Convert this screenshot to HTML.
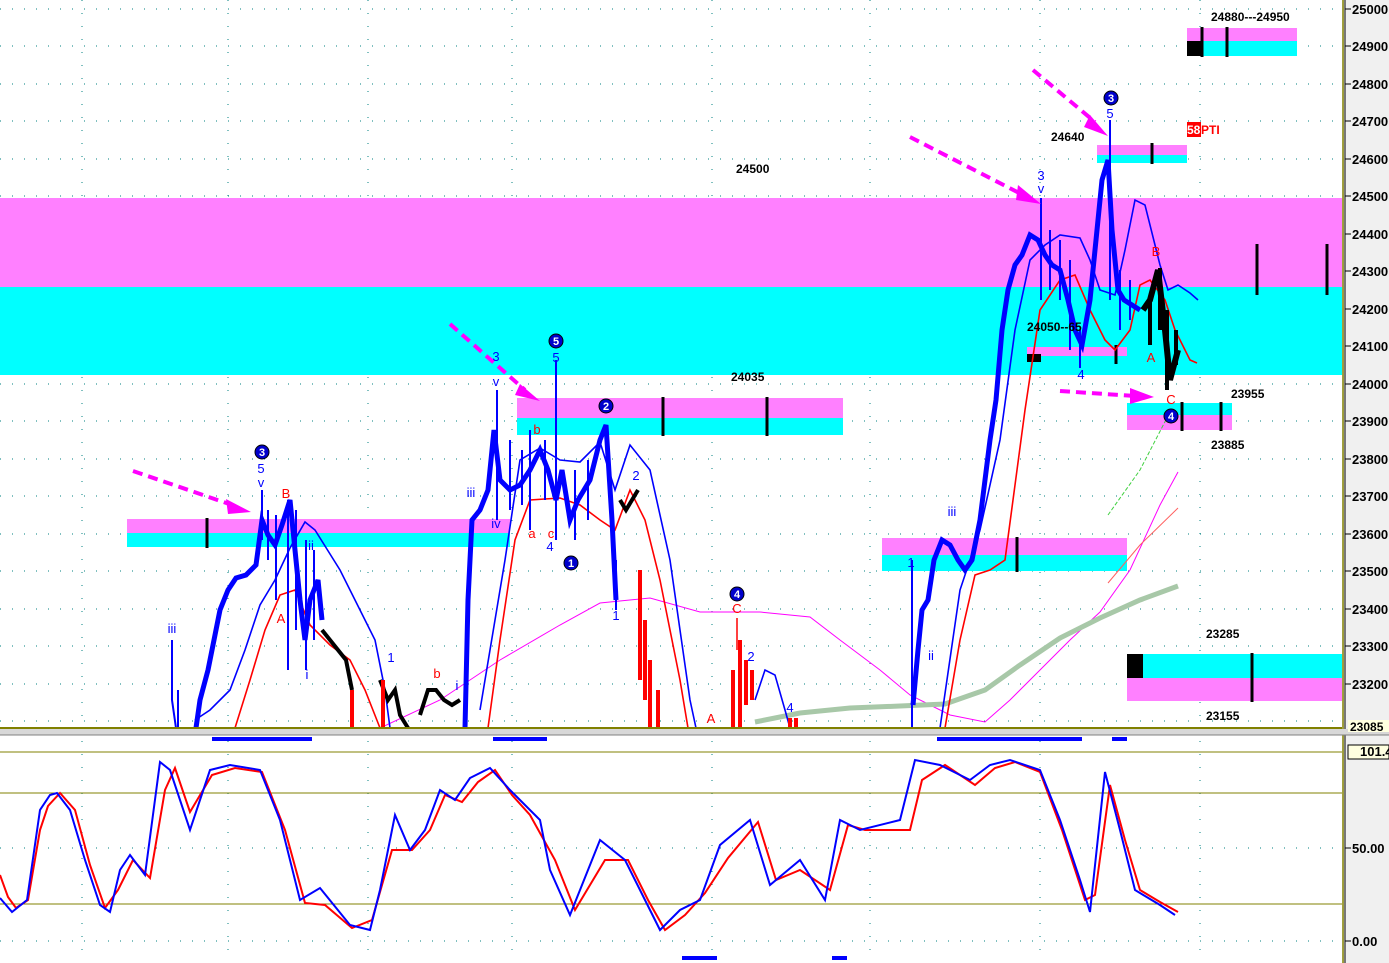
<!DOCTYPE html>
<html><head><meta charset="utf-8"><style>
html,body{margin:0;padding:0;background:#fff;}
svg{display:block;font-family:"Liberation Sans",Arial,sans-serif;}
</style></head><body>
<svg width="1389" height="963" viewBox="0 0 1389 963" xmlns="http://www.w3.org/2000/svg">
<rect x="0" y="0" width="1389" height="963" fill="#fff"/>
<rect x="1343" y="0" width="46" height="963" fill="#f0f0f0"/>
<line x1="1343" y1="0" x2="1343" y2="963" stroke="#808000" stroke-width="1.5"/>
<line x1="1345" y1="0" x2="1345" y2="963" stroke="#000" stroke-width="1"/>
<g stroke="#008080" stroke-width="1" stroke-dasharray="1,11">
<line x1="0" y1="9" x2="1342" y2="9"/><line x1="0" y1="46" x2="1342" y2="46"/><line x1="0" y1="84" x2="1342" y2="84"/><line x1="0" y1="121" x2="1342" y2="121"/><line x1="0" y1="159" x2="1342" y2="159"/><line x1="0" y1="196" x2="1342" y2="196"/><line x1="0" y1="234" x2="1342" y2="234"/><line x1="0" y1="271" x2="1342" y2="271"/><line x1="0" y1="309" x2="1342" y2="309"/><line x1="0" y1="346" x2="1342" y2="346"/><line x1="0" y1="384" x2="1342" y2="384"/><line x1="0" y1="421" x2="1342" y2="421"/><line x1="0" y1="459" x2="1342" y2="459"/><line x1="0" y1="496" x2="1342" y2="496"/><line x1="0" y1="534" x2="1342" y2="534"/><line x1="0" y1="571" x2="1342" y2="571"/><line x1="0" y1="609" x2="1342" y2="609"/><line x1="0" y1="646" x2="1342" y2="646"/><line x1="0" y1="684" x2="1342" y2="684"/><line x1="0" y1="721" x2="1342" y2="721"/>
<line x1="0" y1="848" x2="1342" y2="848"/><line x1="0" y1="941" x2="1342" y2="941"/>
</g>
<g stroke="#008080" stroke-width="1" stroke-dasharray="1,12">
<line x1="82" y1="0" x2="82" y2="960"/><line x1="228" y1="0" x2="228" y2="960"/><line x1="368" y1="0" x2="368" y2="960"/><line x1="512" y1="0" x2="512" y2="960"/><line x1="712" y1="0" x2="712" y2="960"/><line x1="870" y1="0" x2="870" y2="960"/><line x1="1040" y1="0" x2="1040" y2="960"/><line x1="1200" y1="0" x2="1200" y2="960"/>
</g>
<rect x="0" y="198" width="1342" height="89" fill="#ff80ff"/>
<rect x="0" y="287" width="1342" height="88" fill="#00ffff"/>
<rect x="1187" y="28" width="110" height="13" fill="#ff80ff"/>
<rect x="1187" y="41" width="110" height="15" fill="#00ffff"/>
<rect x="1187" y="41" width="16" height="15" fill="#000"/>
<rect x="1097" y="145" width="90" height="10" fill="#ff80ff"/>
<rect x="1097" y="155" width="90" height="8" fill="#00ffff"/>
<rect x="517" y="398" width="326" height="20" fill="#ff80ff"/>
<rect x="517" y="418" width="326" height="17" fill="#00ffff"/>
<rect x="127" y="519" width="383" height="14" fill="#ff80ff"/>
<rect x="127" y="533" width="383" height="14" fill="#00ffff"/>
<rect x="882" y="538" width="245" height="17" fill="#ff80ff"/>
<rect x="882" y="555" width="245" height="16" fill="#00ffff"/>
<rect x="1027" y="347" width="100" height="9" fill="#ff80ff"/>
<rect x="1027" y="354" width="14" height="8" fill="#000"/>
<rect x="1127" y="403" width="105" height="12" fill="#00ffff"/>
<rect x="1127" y="415" width="105" height="15" fill="#ff80ff"/>
<rect x="1127" y="654" width="215" height="24" fill="#00ffff"/>
<rect x="1127" y="678" width="215" height="23" fill="#ff80ff"/>
<rect x="1127" y="654" width="16" height="24" fill="#000"/>
<g stroke="#000" stroke-width="3">
<line x1="1202" y1="27" x2="1202" y2="57"/><line x1="1227" y1="27" x2="1227" y2="57"/>
<line x1="1152" y1="143" x2="1152" y2="164"/><line x1="663" y1="397" x2="663" y2="436"/><line x1="767" y1="397" x2="767" y2="436"/>
<line x1="207" y1="518" x2="207" y2="548"/><line x1="1017" y1="537" x2="1017" y2="572"/>
<line x1="1182" y1="402" x2="1182" y2="431"/><line x1="1221" y1="402" x2="1221" y2="431"/>
<line x1="1252" y1="653" x2="1252" y2="702"/><line x1="1257" y1="244" x2="1257" y2="295"/><line x1="1327" y1="244" x2="1327" y2="295"/>
<line x1="1116" y1="345" x2="1116" y2="364"/>
</g>
<polyline fill="none" stroke="#ff00ff" stroke-width="1" points="380,728 440,700 500,660 560,625 600,603 650,598 700,612 760,612 810,617 840,640 880,670 910,695 950,715 985,722 1010,700 1040,670 1070,640 1100,612 1130,570 1160,505 1178,472"/>
<polyline fill="none" stroke="#ff6060" stroke-width="1" points="1108,583 1140,545 1178,508"/>
<polyline fill="none" stroke="#40d040" stroke-width="1" stroke-dasharray="4,2" points="1108,515 1140,470 1170,412"/>
<polyline fill="none" stroke="#a8c8a8" stroke-width="5" points="755,722 800,713 850,708 900,706 945,704 985,690 1020,665 1060,638 1100,618 1140,600 1178,586"/>
<polyline fill="none" stroke="#0000ff" stroke-width="1.6" points="195,720 210,710 230,690 245,650 260,605 275,580 290,548 305,522 315,530 340,570 360,610 375,640 385,690 390,728"/>
<polyline fill="none" stroke="#0000ff" stroke-width="1.6" points="480,710 490,650 505,560 520,460 540,448 560,460 580,462 600,442 615,490 630,445 650,470 670,560 690,700 696,728"/>
<polyline fill="none" stroke="#0000ff" stroke-width="1.6" points="755,700 765,670 775,675 785,710 790,728"/>
<polyline fill="none" stroke="#0000ff" stroke-width="1.6" points="940,728 960,590 980,530 1000,440 1015,330 1030,260 1045,245 1060,235 1080,238 1090,260 1100,290 1115,295 1125,250 1135,200 1145,205 1160,265 1168,290 1178,285 1190,293 1198,300"/>
<polyline fill="none" stroke="#ff0000" stroke-width="1.6" points="235,728 250,680 265,630 280,595 295,590 310,625 330,645 350,660 365,690 380,728"/>
<polyline fill="none" stroke="#ff0000" stroke-width="1.6" points="488,728 500,640 515,540 530,500 560,498 580,505 600,520 615,530 630,490 645,520 660,580 680,680 688,728"/>
<polyline fill="none" stroke="#ff0000" stroke-width="1.6" points="945,728 960,640 975,575 990,570 1005,560 1025,410 1040,310 1060,280 1075,275 1090,310 1105,340 1115,350 1130,330 1140,285 1150,280 1165,300 1175,330 1190,360 1197,363"/>
<g stroke="#0000ff" stroke-width="2" fill="none">
<polyline points="172,640 172,700 176,728"/>
<polyline points="178,690 178,728"/>
<polyline stroke-width="5" points="196,728 200,700 208,670 214,640 220,610 228,590 236,578 246,575 256,565 262,520 268,535 275,545 282,525 290,500 296,560 300,600 305,640 310,600 318,580 322,620"/>
<line x1="262" y1="490" x2="262" y2="540"/><line x1="288" y1="500" x2="288" y2="670"/><line x1="314" y1="550" x2="314" y2="640"/><line x1="306" y1="540" x2="306" y2="670"/>
<line x1="268" y1="510" x2="268" y2="560"/><line x1="276" y1="515" x2="276" y2="600"/><line x1="296" y1="510" x2="296" y2="630"/>
<polyline stroke-width="5" points="465,728 468,600 472,520 480,510 488,490 494,430 500,480 510,490 520,485 530,470 540,450 548,470 556,500 562,470 570,520 578,500 590,480 600,440 606,425 612,520 616,600"/>
<line x1="497" y1="390" x2="497" y2="520"/><line x1="556" y1="360" x2="556" y2="540"/><line x1="530" y1="430" x2="530" y2="530"/><line x1="616" y1="560" x2="616" y2="610"/>
<line x1="510" y1="440" x2="510" y2="510"/><line x1="522" y1="450" x2="522" y2="505"/><line x1="545" y1="440" x2="545" y2="500"/><line x1="575" y1="470" x2="575" y2="540"/><line x1="588" y1="460" x2="588" y2="520"/>
<polyline stroke-width="5" points="913,705 918,650 922,610 928,600 934,560 942,540 950,545 958,560 965,570 972,560 980,520 985,480 990,440 996,400 1002,330 1008,290 1015,265 1022,255 1030,235 1038,240 1045,255 1052,265 1060,270 1068,300 1075,330 1082,345 1090,300 1096,240 1102,180 1108,160 1112,230 1118,290 1124,300 1132,305 1140,310"/>
<line x1="912" y1="560" x2="912" y2="728"/><line x1="1041" y1="198" x2="1041" y2="300"/><line x1="1110" y1="120" x2="1110" y2="300"/><line x1="1080" y1="330" x2="1080" y2="368"/>
<line x1="1050" y1="230" x2="1050" y2="290"/><line x1="1060" y1="240" x2="1060" y2="300"/><line x1="1070" y1="260" x2="1070" y2="350"/><line x1="1120" y1="270" x2="1120" y2="330"/><line x1="1130" y1="280" x2="1130" y2="320"/>
</g>
<g stroke="#000" stroke-width="4" fill="none">
<polyline points="322,630 330,640 338,650 346,660 352,690"/>
<polyline points="380,680 388,700 395,690 400,715 408,728"/>
<polyline points="420,715 428,690 436,690 444,700 452,705 460,700"/>
<polyline points="620,500 626,510 632,500 638,490"/>
<polyline stroke-width="6" points="1143,310 1150,300 1158,270 1165,330 1170,380 1178,350"/>
<line x1="1160" y1="268" x2="1160" y2="330"/><line x1="1167" y1="310" x2="1167" y2="390"/>
<line x1="1150" y1="300" x2="1150" y2="345"/><line x1="1176" y1="330" x2="1176" y2="365"/>
</g>
<g stroke="#ff0000" stroke-width="4" fill="none">
<line x1="640" y1="570" x2="640" y2="680"/><line x1="645" y1="620" x2="645" y2="700"/><line x1="650" y1="660" x2="650" y2="728"/><line x1="658" y1="690" x2="658" y2="728"/>
<line x1="352" y1="690" x2="352" y2="728"/><line x1="383" y1="680" x2="383" y2="728"/>
<line x1="733" y1="670" x2="733" y2="728"/><line x1="740" y1="640" x2="740" y2="728"/><line x1="746" y1="660" x2="746" y2="705"/><line x1="752" y1="670" x2="752" y2="700"/><line x1="737" y1="618" x2="737" y2="650" stroke-width="1.5"/>
<line x1="790" y1="718" x2="790" y2="728"/><line x1="796" y1="718" x2="796" y2="728"/>
</g>
<g stroke="#ff00ff" stroke-width="4" stroke-dasharray="10,6" fill="none">
<line x1="133" y1="471" x2="235" y2="506"/><line x1="450" y1="324" x2="525" y2="390"/><line x1="910" y1="137" x2="1025" y2="196"/><line x1="1033" y1="70" x2="1095" y2="122"/><line x1="1060" y1="391" x2="1135" y2="396"/>
</g>
<g fill="#ff00ff">
<polygon points="251,512 226,499 228,514"/><polygon points="540,401 520,384 515,395"/><polygon points="1041,204 1018,185 1016,200"/><polygon points="1108,136 1090,115 1084,127"/><polygon points="1154,397 1130,388 1130,404"/>
</g>
<rect x="0" y="727" width="1342" height="2" fill="#808000"/>
<rect x="0" y="729" width="1389" height="6" fill="#d8d8d8"/>
<line x1="0" y1="735" x2="1389" y2="735" stroke="#808080"/>
<g fill="#0000ff">
<rect x="212" y="737" width="100" height="4"/><rect x="493" y="737" width="54" height="4"/><rect x="937" y="737" width="145" height="4"/><rect x="1112" y="737" width="15" height="4"/>
<rect x="682" y="956" width="35" height="4"/><rect x="832" y="956" width="15" height="4"/>
</g>
<line x1="0" y1="752" x2="1342" y2="752" stroke="#808000"/>
<line x1="0" y1="793" x2="1342" y2="793" stroke="#808000"/>
<line x1="0" y1="904" x2="1342" y2="904" stroke="#808000"/>
<polyline fill="none" stroke="#ff0000" stroke-width="2" points="0,875 8,897 16,908 28,900 40,830 48,806 60,793 75,810 90,865 105,908 118,890 133,860 150,878 165,790 175,768 190,812 212,775 235,768 262,772 285,830 305,903 325,905 352,928 372,920 392,850 412,850 430,830 445,795 462,802 478,782 495,770 512,795 530,815 555,860 575,910 605,860 628,860 648,900 665,930 685,915 705,893 728,858 758,822 776,880 800,870 830,890 848,825 865,830 910,830 922,780 945,765 975,785 995,768 1015,762 1040,772 1062,830 1085,900 1095,895 1110,785 1125,840 1140,890 1160,902 1178,912"/>
<polyline fill="none" stroke="#0000ff" stroke-width="2" points="0,898 12,912 27,900 40,810 50,795 57,793 70,810 85,860 100,905 110,912 120,870 130,855 145,875 160,762 170,770 190,830 210,770 230,765 260,770 280,820 300,900 320,888 350,925 370,930 380,890 395,815 410,850 425,830 440,790 455,800 470,778 490,768 510,790 540,820 550,870 570,915 600,840 625,860 640,890 660,930 680,910 700,900 720,845 750,820 770,885 800,860 825,900 840,820 860,830 900,820 915,760 940,765 970,780 990,765 1010,760 1040,770 1060,820 1080,880 1090,912 1105,772 1120,830 1135,890 1160,905 1175,915"/>
<g font-size="13" font-weight="bold" fill="#000">
<text x="1352" y="14">25000</text><text x="1352" y="51">24900</text><text x="1352" y="89">24800</text><text x="1352" y="126">24700</text><text x="1352" y="164">24600</text><text x="1352" y="201">24500</text><text x="1352" y="239">24400</text><text x="1352" y="276">24300</text><text x="1352" y="314">24200</text><text x="1352" y="351">24100</text><text x="1352" y="389">24000</text><text x="1352" y="426">23900</text><text x="1352" y="464">23800</text><text x="1352" y="501">23700</text><text x="1352" y="539">23600</text><text x="1352" y="576">23500</text><text x="1352" y="614">23400</text><text x="1352" y="651">23300</text><text x="1352" y="689">23200</text>
<text x="1352" y="853">50.00</text><text x="1352" y="946">0.00</text>
</g>
<rect x="1348" y="745" width="41" height="14" fill="#ffffe0" stroke="#000"/>
<text x="1360" y="756" font-size="13" font-weight="bold">101.4</text>
<rect x="1348" y="720" width="41" height="12" fill="#ffffe0"/>
<text x="1350" y="731" font-size="12" font-weight="bold">23085</text>
<g stroke="#000"><line x1="1345" y1="9" x2="1351" y2="9"/><line x1="1345" y1="46" x2="1351" y2="46"/><line x1="1345" y1="84" x2="1351" y2="84"/><line x1="1345" y1="121" x2="1351" y2="121"/><line x1="1345" y1="159" x2="1351" y2="159"/><line x1="1345" y1="196" x2="1351" y2="196"/><line x1="1345" y1="234" x2="1351" y2="234"/><line x1="1345" y1="271" x2="1351" y2="271"/><line x1="1345" y1="309" x2="1351" y2="309"/><line x1="1345" y1="346" x2="1351" y2="346"/><line x1="1345" y1="384" x2="1351" y2="384"/><line x1="1345" y1="421" x2="1351" y2="421"/><line x1="1345" y1="459" x2="1351" y2="459"/><line x1="1345" y1="496" x2="1351" y2="496"/><line x1="1345" y1="534" x2="1351" y2="534"/><line x1="1345" y1="571" x2="1351" y2="571"/><line x1="1345" y1="609" x2="1351" y2="609"/><line x1="1345" y1="646" x2="1351" y2="646"/><line x1="1345" y1="684" x2="1351" y2="684"/><line x1="1345" y1="848" x2="1351" y2="848"/><line x1="1345" y1="941" x2="1351" y2="941"/></g>
<g font-size="12" font-weight="bold" fill="#000">
<text x="1211" y="21">24880---24950</text><text x="1051" y="141">24640</text><text x="736" y="173">24500</text><text x="731" y="381">24035</text>
<text x="1027" y="331">24050--65</text><text x="1231" y="398">23955</text><text x="1211" y="449">23885</text><text x="1206" y="638">23285</text><text x="1206" y="720">23155</text>
</g>
<rect x="1187" y="122" width="14" height="15" fill="#ff0000"/>
<text x="1187" y="134" font-size="12" font-weight="bold" fill="#fff">58</text>
<text x="1201" y="134" font-size="12" font-weight="bold" fill="#ff0000">PTI</text>
<g fill="#0000cc" stroke="#000" stroke-width="1">
<circle cx="262" cy="452" r="7"/><circle cx="556" cy="341" r="7"/><circle cx="606" cy="406" r="7"/><circle cx="571" cy="563" r="7"/><circle cx="737" cy="594" r="7"/><circle cx="1111" cy="98" r="7"/><circle cx="1171" cy="416" r="7"/>
</g>
<g font-size="11" font-weight="bold" fill="#fff" text-anchor="middle">
<text x="262" y="456">3</text><text x="556" y="345">5</text><text x="606" y="410">2</text><text x="571" y="567">1</text><text x="737" y="598">4</text><text x="1111" y="102">3</text><text x="1171" y="420">4</text>
</g>
<g font-size="13" fill="#0000ff" text-anchor="middle">
<text x="261" y="473">5</text><text x="261" y="487">v</text><text x="172" y="633">iii</text><text x="311" y="550">ii</text><text x="307" y="679">i</text>
<text x="496" y="361">3</text><text x="496" y="386">v</text><text x="556" y="362">5</text><text x="471" y="497">iii</text><text x="496" y="528">iv</text><text x="550" y="551">4</text><text x="616" y="620">1</text><text x="636" y="480">2</text>
<text x="391" y="662">1</text><text x="457" y="690">i</text>
<text x="751" y="661">2</text><text x="790" y="712">4</text>
<text x="911" y="567">1</text><text x="931" y="660">ii</text><text x="952" y="516">iii</text><text x="1041" y="180">3</text><text x="1041" y="193">v</text><text x="1110" y="118">5</text><text x="1081" y="379">4</text>
</g>
<g font-size="13" fill="#ff0000" text-anchor="middle">
<text x="286" y="498">B</text><text x="281" y="623">A</text><text x="537" y="434">b</text><text x="532" y="538">a</text><text x="551" y="538">c</text><text x="437" y="678">b</text><text x="737" y="613">C</text><text x="711" y="723">A</text><text x="1156" y="256">B</text><text x="1151" y="362">A</text><text x="1171" y="404">C</text>
</g>
</svg>
</body></html>
